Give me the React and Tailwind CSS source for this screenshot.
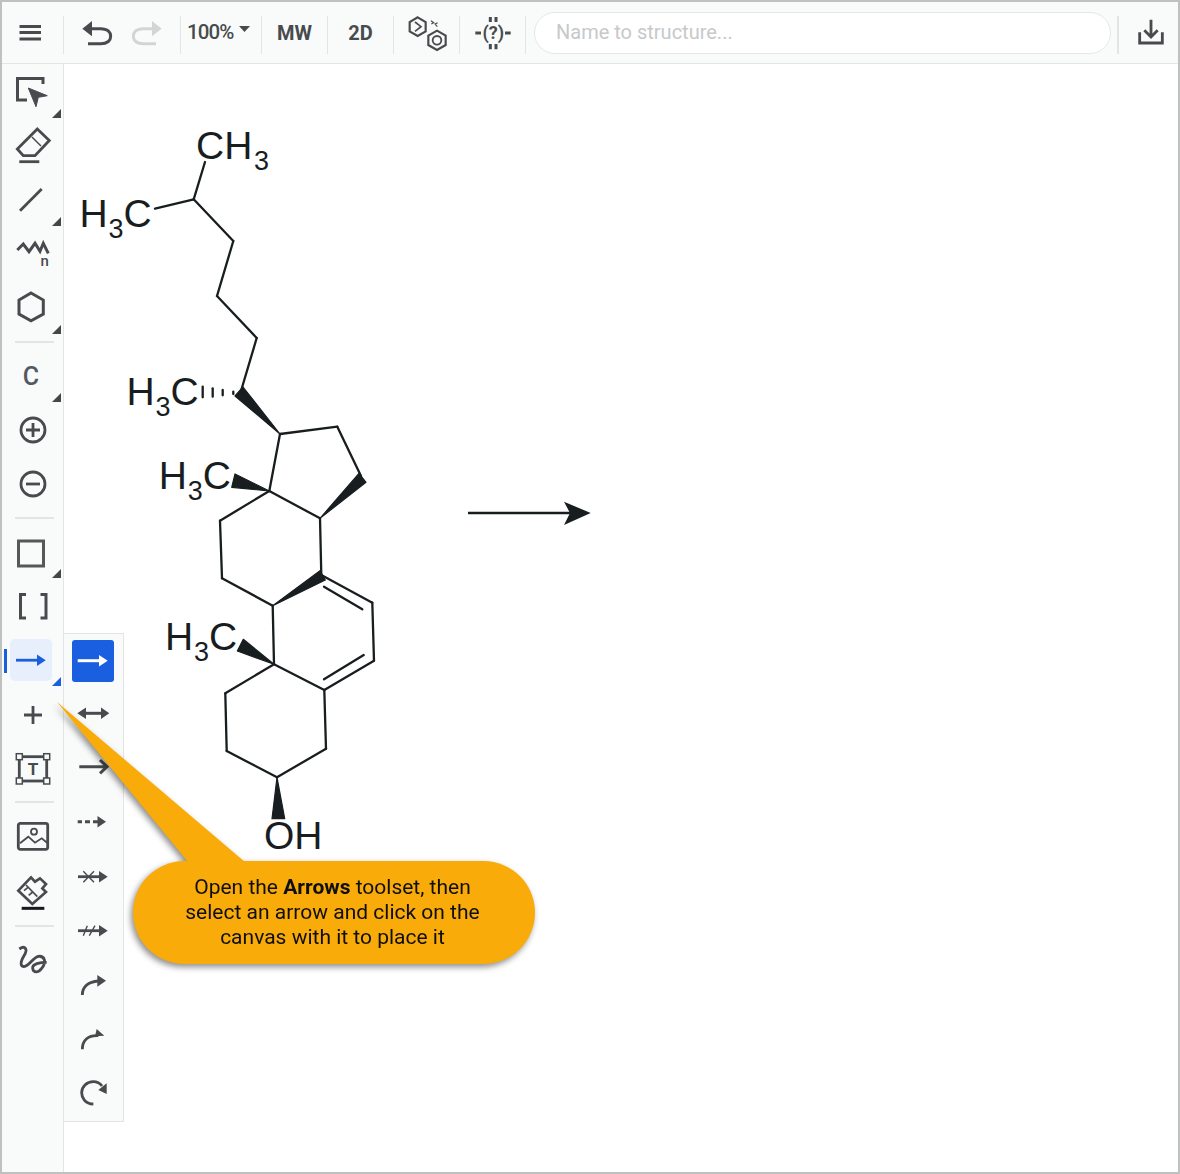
import React from 'react';

const FONT = 'font-["Roboto","Liberation_Sans",sans-serif]';

function Sep() {
  return <div className="mb-[9px] h-[38px] w-px shrink-0 self-end bg-[#e3e5e5]" />;
}

function SideSep({ className = 'my-[6px]' }) {
  return <div className={`ml-[13px] h-[2px] w-[39px] bg-[#e3e5e5] ${className}`} />;
}

// little corner mark on tools that open a toolset
function Corner({ blue }) {
  return (
    <svg className="absolute bottom-[1px] right-[2px] h-[9px] w-[9px]" viewBox="0 0 9 9">
      <polygon points="9,0 9,9 0,9" fill={blue ? '#1a5fe0' : '#444749'} />
    </svg>
  );
}

function Glyph({ box = '0 0 42 42', children, className = 'text-[#484b4d]' }) {
  return (
    <svg
      viewBox={box}
      className={`h-[42px] w-[42px] ${className}`}
      fill="none"
      stroke="currentColor"
      strokeWidth="2.8"
    >
      {children}
    </svg>
  );
}

function SideTool({ corner, active, children }) {
  return (
    <div className="relative h-[54px] w-[61px] shrink-0 pl-[8px] pt-[6px]">
      {active && <div className="absolute left-[2px] top-[16px] h-[24px] w-[3px] bg-[#1a5fe0]" />}
      <div className={`h-[42px] w-[42px] rounded-[5px] ${active ? 'bg-[#e6effb]' : ''}`}>{children}</div>
      {corner && <Corner blue={active} />}
    </div>
  );
}

function ArrowTool({ selected, children }) {
  return (
    <div className="h-[54px] pl-[8px] pt-[6px]">
      <div className={`h-[42px] w-[42px] rounded-[3px] ${selected ? 'bg-[#1a5fe0]' : ''}`}>{children}</div>
    </div>
  );
}

function TopBar() {
  return (
    <div className="flex h-[62px] shrink-0 items-center border-b border-[#e3e5e5] bg-[#f9fbfb] text-[#484b4d]">
      <div className="flex h-full w-[61px] shrink-0 items-center justify-center">
        <svg viewBox="0 0 61 61" className="h-[61px] w-[61px]" stroke="currentColor" strokeWidth="2.8">
          <path d="M17.5 24.5H39M17.5 30.5H39M17.5 37H39" />
        </svg>
      </div>
      <Sep />
      <div className="flex h-full w-[116px] shrink-0 items-center px-[8px]">
        <div className="flex w-[50px] justify-center">
          <svg viewBox="238 44 108 108" className="h-[36px] w-[36px]" fill="none" stroke="currentColor" strokeWidth="9">
            <path d="M262 85H303C324 85 333 96 333 108C333 120 324 130 303 130H265" />
            <polygon points="248,85 277,62 277,108" fill="currentColor" stroke="none" />
          </svg>
        </div>
        <div className="flex w-[50px] justify-center">
          <svg viewBox="238 44 108 108" className="h-[36px] w-[36px] -scale-x-100 text-[#d3d5d5]" fill="none" stroke="currentColor" strokeWidth="9">
            <path d="M262 85H303C324 85 333 96 333 108C333 120 324 130 303 130H265" />
            <polygon points="248,85 277,62 277,108" fill="currentColor" stroke="none" />
          </svg>
        </div>
      </div>
      <Sep />
      <div className="flex h-full w-[80px] shrink-0 items-center pl-[6px]">
        <span className="text-[20.5px] font-medium leading-none tracking-[-0.9px]">100%</span>
        <svg viewBox="0 0 11 6" className="mb-[8px] ml-[6px] h-[6px] w-[11px]">
          <polygon points="0,0 11,0 5.5,6" fill="currentColor" />
        </svg>
      </div>
      <Sep />
      <div className="flex h-full w-[65px] shrink-0 items-center justify-center text-[20px] font-bold">MW</div>
      <Sep />
      <div className="flex h-full w-[65px] shrink-0 items-center justify-center text-[20px] font-bold">2D</div>
      <Sep />
      <div className="flex h-full w-[65px] shrink-0 items-center justify-center">
        <svg viewBox="20 37 120 120" className="h-[40px] w-[40px]" fill="none" stroke="currentColor" strokeWidth="6.5">
          <polygon points="52,50 76,64 76,92 52,106 28,92 28,64" />
          <polyline points="44,64 62,78 44,92" strokeWidth="5" />
          <polygon points="110,90 136,105 136,133 110,148 84,133 84,105" />
          <circle cx="110" cy="119" r="13" strokeWidth="5.5" />
          <path d="M92 60L100 66L93 70M112 66L104 70L111 78" strokeWidth="3.5" />
        </svg>
      </div>
      <Sep />
      <div className="flex h-full w-[65px] shrink-0 items-center justify-center">
        <svg viewBox="219 38 120 120" className="h-[40px] w-[40px]" fill="none" stroke="currentColor" strokeWidth="9">
          <path d="M271 50V65M288 50V65M271 131V147M288 131V147M226 98H243M315 98H332" />
          <text x="280" y="116" textAnchor="middle" fontSize="54" fontWeight="700" fill="currentColor" stroke="none" fontFamily="Roboto, sans-serif">(?)</text>
        </svg>
      </div>
      <Sep />
      <div className="ml-[8px] flex h-[42px] w-[577px] shrink-0 items-center rounded-full border border-[#e6e8e8] bg-white pb-[1px] pl-[21px] text-[20px] text-[#c6c9cb]">
        Name to structure...
      </div>
      <div className="mb-[9px] ml-[6px] h-[38px] w-[2px] shrink-0 self-end bg-[#e3e5e5]" />
      <div className="flex h-full flex-1 items-center justify-center pl-[5px]">
        <svg viewBox="152 38 120 120" className="h-[40px] w-[40px]" fill="none" stroke="currentColor" strokeWidth="8.5">
          <path d="M212 58V108M192 90L212 110L232 90M178 96V128H246V96" />
        </svg>
      </div>
    </div>
  );
}

function Sidebar() {
  return (
    <div className="relative w-[62px] shrink-0 border-r border-[#e3e5e5] bg-[#f9fbfb] pt-[1px]">
      <SideTool corner>
        <Glyph>
          <path d="M33 13V7.5H7.5V29H17" strokeWidth="3" />
          <polygon points="18.3,17 37.3,24.7 28.3,26.3 26,35.7" fill="currentColor" strokeWidth="1" />
        </Glyph>
      </SideTool>
      <SideTool>
        <Glyph>
          <polygon points="27.3,4 39.3,15.5 25,30.7 13.3,30.7 7.3,24" />
          <path d="M22 12L31 21" strokeWidth="1.5" />
          <path d="M9.3 36.7H29.3" />
        </Glyph>
      </SideTool>
      <SideTool corner>
        <Glyph>
          <path d="M10 31.7L31.7 10" />
        </Glyph>
      </SideTool>
      <SideTool>
        <Glyph>
          <polyline points="7.3,17 13.3,11 19,18.7 25,10.3 30,18.3 33.3,10.3 38.3,20.3" strokeWidth="3" />
          <text x="30.5" y="33" fontSize="15" fontWeight="500" fill="currentColor" stroke="none" fontFamily="Roboto, sans-serif">n</text>
        </Glyph>
      </SideTool>
      <SideTool corner>
        <Glyph>
          <polygon points="21,6 33.3,13 33.3,27 21,33.7 9,27 9,13" strokeWidth="3" />
        </Glyph>
      </SideTool>
      <SideSep />
      <SideTool corner>
        <div className="flex h-[42px] w-[42px] items-center justify-center pt-[1px] text-[25px] font-medium leading-none text-[#555a5e]">C</div>
      </SideTool>
      <SideTool>
        <Glyph>
          <circle cx="23" cy="21" r="12" />
          <path d="M16 21H30M23 14V28" />
        </Glyph>
      </SideTool>
      <SideTool>
        <Glyph>
          <circle cx="23" cy="21" r="12" />
          <path d="M16 21H30" />
        </Glyph>
      </SideTool>
      <SideSep />
      <SideTool corner>
        <Glyph className="text-[#555759]">
          <rect x="8.5" y="10" width="25" height="25" strokeWidth="3" />
        </Glyph>
      </SideTool>
      <SideTool>
        <Glyph>
          <path d="M16 9.5H10.5V33H16M30.5 9.5H36V33H30.5" strokeWidth="3" />
        </Glyph>
      </SideTool>
      <SideTool corner active>
        <Glyph className="text-[#1a5fe0]">
          <path d="M6 21.2H28" />
          <polygon points="27,15.5 35.7,21.2 27,27" fill="currentColor" stroke="none" />
        </Glyph>
      </SideTool>
      <SideTool>
        <Glyph>
          <path d="M14 22H32M23 13V31" />
        </Glyph>
      </SideTool>
      <SideTool>
        <Glyph>
          <rect x="9.3" y="9.7" width="27.4" height="24.3" />
          <g fill="#f9fbfb" strokeWidth="1.5">
            <rect x="6.3" y="6.7" width="6" height="6" />
            <rect x="33.7" y="6.7" width="6" height="6" />
            <rect x="6.3" y="31" width="6" height="6" />
            <rect x="33.7" y="31" width="6" height="6" />
          </g>
          <text x="23" y="28" textAnchor="middle" fontSize="17" fontWeight="700" fill="currentColor" stroke="none" fontFamily="Roboto, sans-serif">T</text>
        </Glyph>
      </SideTool>
      <SideSep />
      <SideTool>
        <Glyph>
          <rect x="8.3" y="8.3" width="29.4" height="26" rx="2" />
          <circle cx="24" cy="16.7" r="3" strokeWidth="1.8" />
          <polyline points="10,28.3 18.3,21.7 25,27.7 31.7,23.3 37.7,28.3" strokeWidth="1.8" />
        </Glyph>
      </SideTool>
      <SideTool>
        <Glyph box="30 27 126 126">
          <polygon points="55,92 93,52 105,65 120,55 138,72 127,85 138,96 97,132" strokeWidth="8" />
          <path d="M78 75L112 110M72 92L84 82M86 106L98 96" strokeWidth="5" />
          <path d="M65 145H133" stroke="#15191b" strokeWidth="9" />
        </Glyph>
      </SideTool>
      <SideSep className="mb-[6px] mt-[8px]" />
      <SideTool>
        <Glyph box="30 240 126 126">
          <path
            d="M58 270C75 258 85 270 72 290C60 310 60 325 75 322C90 318 100 295 115 292C135 290 140 310 125 328C115 342 100 342 98 328C96 315 120 310 140 310"
            strokeWidth="8.5"
          />
        </Glyph>
      </SideTool>

      {/* Arrows toolset */}
      <div className="absolute left-[62px] top-[569px] h-[489px] w-[60px] border-y border-r border-[#e3e5e5] bg-[#f9fbfb]">
        <ArrowTool selected>
          <Glyph className="text-white">
            <path d="M5.7 20.7H28" strokeWidth="3" />
            <polygon points="27,15 35.7,20.7 27,26.4" fill="currentColor" stroke="none" />
          </Glyph>
        </ArrowTool>
        <ArrowTool>
          <Glyph>
            <path d="M12 19.3H30" strokeWidth="3" />
            <polygon points="5.3,19.3 14,13.5 14,25" fill="currentColor" stroke="none" />
            <polygon points="37.3,19.3 29,13.5 29,25" fill="currentColor" stroke="none" />
          </Glyph>
        </ArrowTool>
        <ArrowTool>
          <Glyph>
            <path d="M7.3 18.7H34M28 12L35 18.7L28 25.4" strokeWidth="3" />
          </Glyph>
        </ArrowTool>
        <ArrowTool>
          <Glyph>
            <path d="M5.7 19.7H10M13 19.7H18M21 19.7H26" strokeWidth="3" />
            <polygon points="25.5,14 34,19.7 25.5,25.4" fill="currentColor" stroke="none" />
          </Glyph>
        </ArrowTool>
        <ArrowTool>
          <Glyph>
            <path d="M6 20.7H28" />
            <polygon points="27,15 35.7,20.7 27,26.4" fill="currentColor" stroke="none" />
            <path d="M11.3 15.2L22 26.2M11.3 26.2L22 15.2" strokeWidth="1.4" />
          </Glyph>
        </ArrowTool>
        <ArrowTool>
          <Glyph>
            <path d="M6 20.7H28" />
            <polygon points="27,15 35.7,20.7 27,26.4" fill="currentColor" stroke="none" />
            <path d="M11.3 25.7L15.3 15.7M17.3 25.7L23 15.7" strokeWidth="1.4" />
          </Glyph>
        </ArrowTool>
        <ArrowTool>
          <Glyph box="216 312 126 126">
            <path d="M247 405C247 380 265 365 295 363" strokeWidth="8.5" />
            <polygon points="292,345 318,362 292,380" fill="currentColor" stroke="none" />
          </Glyph>
        </ArrowTool>
        <ArrowTool>
          <Glyph box="216 474 126 126">
            <path d="M247 568C247 540 265 525 295 527" strokeWidth="8.5" />
            <polygon points="290,507 313,527 285,529" fill="currentColor" stroke="none" />
          </Glyph>
        </ArrowTool>
        <ArrowTool>
          <Glyph box="216 636 126 126">
            <path d="M280 732C255 732 245 712 245 698C245 680 260 665 280 665C292 665 300 670 306 678" strokeWidth="8.5" />
            <polygon points="320,670 320,702 295,690" fill="currentColor" stroke="none" />
          </Glyph>
        </ArrowTool>
      </div>
    </div>
  );
}

const bonds = [
  [205, 162, 193.7, 199.3],
  [155, 208.7, 193.7, 199.3],
  [193.7, 199.3, 233.3, 241],
  [233.3, 241, 217, 296],
  [217, 296, 256.7, 338],
  [256.7, 338, 241, 391],
  [280, 434, 337.3, 426.7],
  [337.3, 426.7, 361, 476],
  [280, 434, 269.3, 491],
  [269.3, 491, 320, 518.3],
  [269.3, 491, 220, 520.7],
  [220, 520.7, 222, 578.3],
  [222, 578.3, 272.7, 605.7],
  [320, 518.3, 321.3, 575],
  [272.7, 605.7, 274, 664.3],
  [321.3, 575, 372.3, 602.7],
  [372.3, 602.7, 374, 660.7],
  [374, 660.7, 324.3, 690],
  [324.3, 690, 274, 664.3],
  [324, 586.7, 362.3, 609.3],
  [324, 679.3, 363.7, 655],
  [324.3, 690, 326, 748.7],
  [326, 748.7, 277, 777.3],
  [277, 777.3, 226.7, 751],
  [226.7, 751, 225.3, 693.3],
  [225.3, 693.3, 274, 664.3],
];

const wedges = [
  '235,396 243,387 280,434',
  '320,518.3 359,473.3 366,482.3',
  '272.7,605.7 320,570.7 325.3,580',
  '269.3,491 235,474 231.7,487.3',
  '274,664.3 243.3,639.3 237.3,651',
  '277,777.3 272,818.7 284.7,818.7',
];

function Methyl({ x, y }) {
  return (
    <>
      <text x={x} y={y}>H</text>
      <text x={x + 29} y={y + 11} fontSize="27">3</text>
      <text x={x + 44} y={y}>C</text>
    </>
  );
}

function Molecule() {
  return (
    <svg viewBox="64 64 1114 1108" className="absolute left-0 top-0 h-[1108px] w-[1114px] text-[#181d1f]">
      <g stroke="currentColor" strokeWidth="2.3" strokeLinecap="round">
        {bonds.map(([x1, y1, x2, y2], i) => (
          <line key={i} x1={x1} y1={y1} x2={x2} y2={y2} />
        ))}
        <line x1="202.7" y1="386.7" x2="202.7" y2="397.3" />
        <line x1="212.7" y1="388.3" x2="212.7" y2="396.7" />
        <line x1="222.7" y1="390" x2="222.7" y2="395.3" />
        <line x1="233.3" y1="391.7" x2="233.3" y2="394" />
      </g>
      <g fill="currentColor" stroke="currentColor" strokeWidth="1.2" strokeLinejoin="round">
        {wedges.map((points) => (
          <polygon key={points} points={points} />
        ))}
      </g>
      <g fill="currentColor" fontSize="39" fontFamily='"Liberation Sans", Arial, sans-serif'>
        <text x="196" y="159">CH</text>
        <text x="254" y="170" fontSize="27">3</text>
        <Methyl x={79.5} y={227} />
        <Methyl x={126.5} y={405} />
        <Methyl x={158.7} y={489} />
        <Methyl x={165} y={649.5} />
        <text x="264" y="849">OH</text>
      </g>
      <path d="M468 513H571" stroke="currentColor" strokeWidth="2.3" />
      <polygon points="564,501.7 590.7,513 564,525 570,513" fill="currentColor" />
    </svg>
  );
}

function Callout() {
  return (
    <div className="absolute left-[55px] top-[700px] h-[262px] w-[478px] drop-shadow-[-2px_3px_3px_rgba(0,0,0,0.45)]">
      <svg viewBox="57 702 478 262" className="absolute left-0 top-0 h-[262px] w-[478px]">
        <polygon points="57,702 245,862 188,862" fill="#f9ab09" />
      </svg>
      <div className="absolute left-[76px] top-[159px] flex h-[103px] w-[402px] items-center justify-center rounded-[52px] bg-[#f9ab09] pr-[3px] text-center text-[21px] leading-[25px] text-[#0f0f0f]">
        <p>
          Open the <b>Arrows</b> toolset, then
          <br />
          select an arrow and click on the
          <br />
          canvas with it to place it
        </p>
      </div>
    </div>
  );
}

export default function App() {
  return (
    <div className={`relative flex h-[1174px] w-[1180px] flex-col overflow-hidden border-2 border-[#bfc1c1] bg-white ${FONT}`}>
      <TopBar />
      <div className="flex min-h-0 flex-1">
        <Sidebar />
        <div className="relative flex-1">
          <Molecule />
        </div>
      </div>
      <Callout />
    </div>
  );
}
